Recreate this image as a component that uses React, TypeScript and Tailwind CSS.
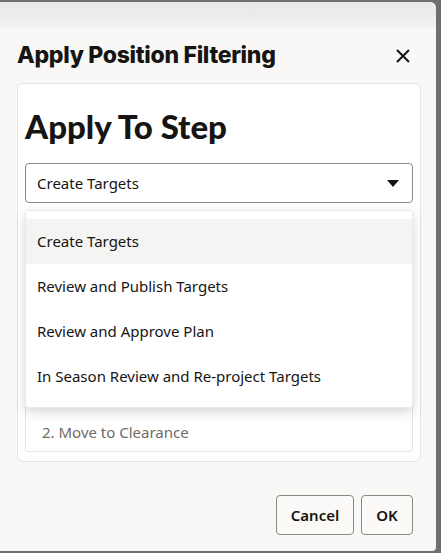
import React from "react";

const steps = [
  "Create Targets",
  "Review and Publish Targets",
  "Review and Approve Plan",
  "In Season Review and Re-project Targets",
];

const App = () => {
  return (
    <div
      className="w-[441px] h-[553px] bg-[#6f6f6f] pt-[2px] pb-[2px] pr-[5px] overflow-hidden"
      style={{ fontFamily: '"Noto Sans", "Open Sans", sans-serif' }}
    >
      <div className="relative w-[436px] h-[549px] bg-[#f9f8f6] rounded-tr-[6px] rounded-br-[4px] flex flex-col">
        {/* textured header strip */}
        <div className="h-[26px] rounded-tr-[6px] bg-gradient-to-b from-[#e9e9e8] via-[#ececeb] to-[#f4f3f1]" />

        {/* title row */}
        <div className="flex items-center justify-between pl-[17px] pr-[26px] h-[55px]">
          <h1
            className="text-[23px] font-extrabold text-[#161513] tracking-[-0.3px]"
            style={{ fontFamily: 'Inter, "Noto Sans", sans-serif' }}
          >
            Apply Position Filtering
          </h1>
          <svg width="14" height="14" viewBox="0 0 14 14" className="text-[#161513]">
            <path d="M1 1L13 13M13 1L1 13" stroke="currentColor" strokeWidth="2" />
          </svg>
        </div>

        {/* inner card */}
        <div className="relative ml-[17px] mr-[15px] h-[379px] bg-white border border-[#e6e4e1] rounded-[6px] px-[7px]">
          <h2
            className="mt-[22px] text-[33px] font-black leading-[40px] text-[#161513]"
            style={{ fontFamily: 'Lato, "Noto Sans", sans-serif' }}
          >
            Apply To Step
          </h2>

          {/* select */}
          <div className="mt-[17px] h-[40px] border border-[#8b8984] rounded-[4px] flex items-center justify-between pl-[11px] pr-[13px] bg-white">
            <span className="text-[15px] text-[#161513]">Create Targets</span>
            <svg width="12" height="7" viewBox="0 0 12 7">
              <path d="M0 0H12L6 7Z" fill="#161513" />
            </svg>
          </div>

          {/* list of steps (partly hidden) */}
          <div className="mt-[9px] h-[240px] border border-[#e6e4e1] rounded-[3px] flex flex-col justify-end pb-[7px]">
            <div className="pl-[16px] text-[15px] text-[#6f6c68] leading-[24px]">2. Move to Clearance</div>
          </div>

          {/* open dropdown */}
          <div className="absolute left-[7px] right-[7px] top-[126px] bg-white border border-[#ebe9e6] rounded-[3px] py-[8px] shadow-[0_4px_12px_rgba(0,0,0,0.16)]">
            {steps.map((s, i) => (
              <div
                key={s}
                className={`h-[45px] flex items-center pl-[11px] text-[15px] text-[#161513] ${
                  i === 0 ? "bg-[#f4f4f3]" : ""
                }`}
              >
                {s}
              </div>
            ))}
          </div>
        </div>

        {/* footer */}
        <div className="flex justify-end gap-[7px] pr-[23px] mt-[33px]">
          <button className="h-[40px] w-[78px] border border-[#8b8984] rounded-[4px] bg-[#fbfaf8] text-[15px] font-semibold text-[#161513]">
            Cancel
          </button>
          <button className="h-[40px] w-[52px] border border-[#8b8984] rounded-[4px] bg-[#fbfaf8] text-[15px] font-semibold text-[#161513]">
            OK
          </button>
        </div>
      </div>
    </div>
  );
};

export default App;
